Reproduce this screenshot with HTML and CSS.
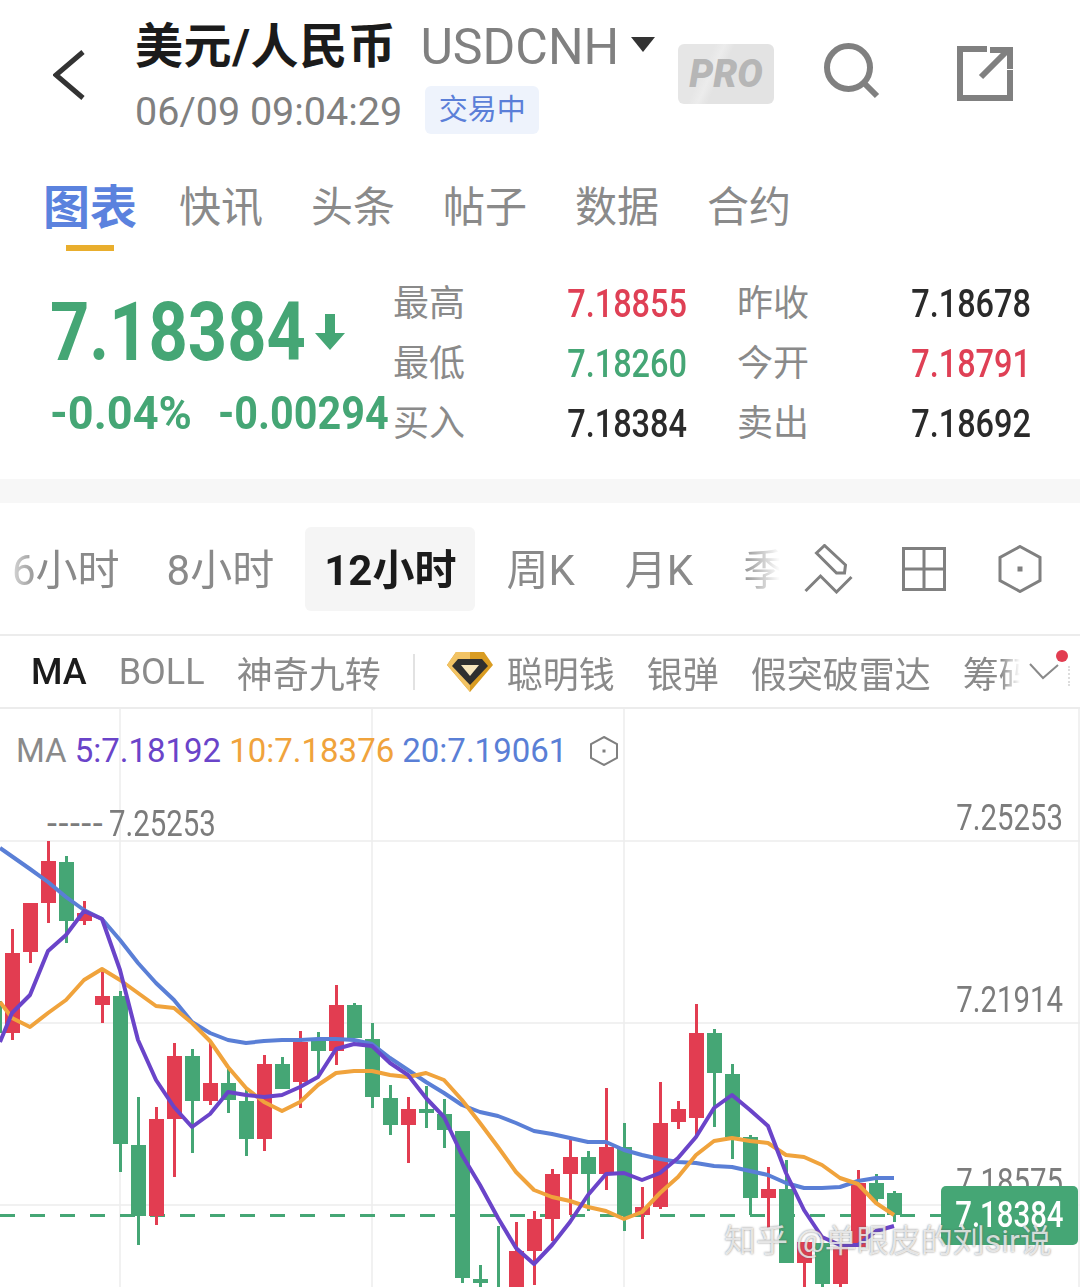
FILE: index.html
```html
<!DOCTYPE html>
<html lang="zh-CN">
<head>
    <meta charset="UTF-8">
    <meta name="viewport" content="width=device-width, initial-scale=1.0">
    <title>USDCNH</title>
    <link rel="stylesheet" href="styles.css">
</head>
<body>
    <!-- Top bar -->
    <header class="topbar">
        <svg class="back-icon" viewBox="0 0 32 50"><path d="M30 2 L3 25 L30 48" /></svg>
        <div class="title-box">
            <div class="title-row">
                <h1>美元/人民币</h1>
                <span class="symbol">USDCNH</span>
                <span class="caret"></span>
            </div>
            <div class="time-row">
                <span class="time">06/09 09:04:29</span>
                <span class="status">交易中</span>
            </div>
        </div>
        <div class="pro-badge">PRO</div>
        <svg class="search-icon" viewBox="0 0 56 56"><circle cx="24.500" cy="24.500" r="21.500" /><path d="M40 40 L53 53" /></svg>
        <svg class="share-icon" viewBox="0 0 56 56"><path d="M30 3 H3 V52 H53 V24" /><path d="M24 31 L50 5 M33 4 H53 V23" /></svg>
    </header>

    <!-- Page tabs -->
    <nav class="tabs">
        <a class="tab active">图表</a>
        <a class="tab">快讯</a>
        <a class="tab">头条</a>
        <a class="tab">帖子</a>
        <a class="tab">数据</a>
        <a class="tab">合约</a>
    </nav>

    <!-- Quote -->
    <section class="quote">
        <div class="quote-main">
            <div class="price-row">
                <span class="price">7.18384</span>
                <svg class="down-arrow" viewBox="0 0 30 36"><path d="M10 0 H20 V19 H30 L15 36 L0 19 H10 Z" /></svg>
            </div>
            <div class="change-row">
                <span class="change-pct">-0.04%</span>
                <span class="change-abs">-0.00294</span>
            </div>
        </div>
        <div class="stats">
            <span class="stat-label">最高</span><span class="stat-value red">7.18855</span>
            <span class="stat-label second">昨收</span><span class="stat-value">7.18678</span>
            <span class="stat-label">最低</span><span class="stat-value green">7.18260</span>
            <span class="stat-label second">今开</span><span class="stat-value red">7.18791</span>
            <span class="stat-label">买入</span><span class="stat-value">7.18384</span>
            <span class="stat-label second">卖出</span><span class="stat-value">7.18692</span>
        </div>
    </section>

    <div class="band"></div>

    <!-- Time frames -->
    <section class="frames">
        <div class="frame-list">
            <span class="frame">6小时</span>
            <span class="frame">8小时</span>
            <span class="frame active">12小时</span>
            <span class="frame">周K</span>
            <span class="frame">月K</span>
            <span class="frame">季K</span>
        </div>
        <svg class="tool-icon pen-icon" viewBox="0 0 50 50">
            <path d="M12.500 9 L20.500 1.500 L41.500 21 L40.500 29 L32.500 29 Z" />
            <path d="M1.500 47 L16.500 32 L32.500 48 L47.500 33" />
        </svg>
        <svg class="tool-icon grid-icon" viewBox="0 0 44 44"><path d="M1.500 1.500 H42.500 V42.500 H1.500 Z M22 1.500 V42.500 M1.500 22 H42.500" /></svg>
        <svg class="tool-icon hex-icon" viewBox="0 0 44 48">
            <path d="M22 1.500 L42 12.500 V35.500 L22 46.500 L2 35.500 V12.500 Z" />
            <rect class="hex-dot" x="19.500" y="21.500" width="5" height="5" />
        </svg>
    </section>

    <!-- Indicators -->
    <section class="indicators">
        <div class="indicator-list">
            <span class="indicator active">MA</span>
            <span class="indicator">BOLL</span>
            <span class="indicator">神奇九转</span>
            <span class="divider"></span>
            <span class="indicator gem-item">
                <svg class="gem-icon" viewBox="0 0 46 40">
                    <path class="gem-shade" d="M9 0 H37 L46 13 L23 40 L0 13 Z" />
                    <path class="gem-gold" d="M9 0 H23 V40 L0 13 Z" />
                    <path class="gem-dark" d="M11 7 H35 L41 14 L23 33 L5 14 Z" />
                    <path class="gem-light" d="M14 13 H32 L23 24 Z" />
                </svg>
                聪明钱
            </span>
            <span class="indicator">银弹</span>
            <span class="indicator">假突破雷达</span>
            <span class="indicator">筹码分布</span>
        </div>
        <svg class="chevron" viewBox="0 0 30 18"><path d="M1 1 L14 15 L29 2" /></svg>
        <span class="red-dot"></span>
        <span class="edge-dots"></span>
    </section>

    <!-- Chart -->
    <section class="chart">
        <svg id="kline" class="kline" viewBox="0 709 1080 578"></svg>
        <div class="legend">
            <span class="legend-name">MA</span>
            <span class="ma5">5:7.18192</span>
            <span class="ma10">10:7.18376</span>
            <span class="ma20">20:7.19061</span>
            <svg class="legend-hex" viewBox="0 0 28 30">
                <path d="M14 1 L27 8 V22 L14 29 L1 22 V8 Z" />
                <rect class="hex-dot" x="12.500" y="13.500" width="3" height="3" />
            </svg>
        </div>
        <div class="high-mark"><span class="high-dash">-----</span><span class="high-value">7.25253</span></div>
        <span class="axis-label axis-top">7.25253</span>
        <span class="axis-label axis-mid">7.21914</span>
        <span class="axis-label axis-low">7.18575</span>
        <div class="last-price"><span class="last-value">7.18384</span></div>
        <span class="watermark">知乎 @单眼皮的刘sir说</span>
    </section>

    <script src="script.js"></script>
</body>
</html>
```

FILE: styles.css
```css
* {
    box-sizing: border-box;
}

body {
    margin: 0;
    width: 1080px;
    height: 1287px;
    overflow: hidden;
    background: #fff;
    font-family: Roboto, "Noto Sans CJK SC", sans-serif;
    color: #888;
}

/* Top bar */
.topbar {
    display: flex;
    align-items: flex-start;
    height: 160px;
    padding-left: 53px;
}

.back-icon {
    width: 32px;
    height: 50px;
    margin-top: 50px;
    fill: none;
    stroke: #333;
    stroke-width: 5;
}

.title-box {
    margin-left: 50px;
    width: 543px;
}

.title-row {
    display: flex;
    align-items: center;
    height: 60px;
    margin-top: 17px;
}

.title-row h1 {
    margin: 0;
    font-size: 48px;
    line-height: 60px;
    font-weight: 700;
    letter-spacing: 0.6px;
    color: #1b1b1b;
}

.symbol {
    margin-left: 24px;
    font-size: 50px;
    color: #808080;
}

.caret {
    margin: 0 0 6px 12px;
    border-left: 12px solid transparent;
    border-right: 12px solid transparent;
    border-top: 15px solid #333;
}

.time-row {
    display: flex;
    align-items: center;
    margin-top: 9px;
}

.time {
    margin-top: 4px;
    font-size: 39.5px;
    line-height: 44px;
    color: #808080;
}

.status {
    margin-left: 23px;
    width: 114px;
    height: 48px;
    line-height: 48px;
    text-align: center;
    border-radius: 6px;
    background: #eef3fc;
    color: #5b7fd8;
    font-size: 29px;
}

.pro-badge {
    width: 96px;
    height: 60px;
    margin-top: 44px;
    border-radius: 6px;
    background: linear-gradient(115deg, #e6e6e6 30%, #ececec 38%, #e3e3e3 46%);
    color: #b6b6b6;
    font-size: 38px;
    font-weight: 900;
    font-style: italic;
    line-height: 60px;
    text-align: center;
}

.search-icon {
    width: 56px;
    height: 56px;
    margin: 43px 0 0 50px;
    fill: none;
    stroke: #808080;
    stroke-width: 6;
}

.share-icon {
    width: 56px;
    height: 56px;
    margin: 46px 0 0 77px;
    fill: none;
    stroke: #808080;
    stroke-width: 6;
}

/* Page tabs */
.tabs {
    display: flex;
    align-items: flex-start;
    height: 100px;
    padding-left: 43px;
}

.tab {
    position: relative;
    width: 132px;
    font-size: 42px;
    line-height: 96px;
    color: #8a8a8a;
}

.tab.active {
    width: 136px;
    font-size: 47px;
    font-weight: 700;
    color: #5b82de;
}

.tab.active:after {
    content: '';
    position: absolute;
    left: 23px;
    top: 85px;
    width: 48px;
    height: 6px;
    background: #e9ae2d;
}

/* Quote */
.quote {
    display: flex;
    height: 219px;
}

.quote-main {
    width: 393px;
    padding-left: 50px;
    color: #45a675;
}

.price-row {
    display: flex;
    align-items: center;
    height: 100px;
    margin-top: 22px;
}

.price {
    width: 265px;
    flex-shrink: 0;
    font-size: 82px;
    font-weight: 700;
    line-height: 100px;
    white-space: nowrap;
    transform: scaleX(0.836);
    transform-origin: left;
}

.down-arrow {
    width: 30px;
    height: 36px;
    flex-shrink: 0;
    fill: #45a675;
}

.change-row {
    display: flex;
    margin-top: 4px;
    font-size: 47px;
    line-height: 54px;
    font-weight: 700;
}

.change-pct {
    width: 168px;
    flex-shrink: 0;
    transform: scaleX(0.96);
    transform-origin: left;
}

.change-abs {
    width: 175px;
    flex-shrink: 0;
    white-space: nowrap;
    transform: scaleX(0.88);
    transform-origin: left;
}

.stats {
    display: grid;
    grid-template-columns: 72px 222px 122px 222px;
    grid-auto-rows: 60px;
    align-items: center;
    margin-top: 13px;
    height: 180px;
}

.stat-label {
    margin-bottom: 6px;
    font-size: 36px;
    color: #8a8a8a;
}

.stat-label.second {
    padding-left: 50px;
}

.stat-value {
    padding-top: 2px;
    text-align: right;
    font-size: 38px;
    font-weight: 500;
    color: #2a2a2a;
    transform: scaleX(0.855);
    transform-origin: right;
}

.stat-value.red {
    color: #df4055;
}

.stat-value.green {
    color: #45a675;
}

.band {
    height: 24px;
    background: #f7f7f7;
}

/* Time frames */
.frames {
    display: flex;
    align-items: center;
    height: 133px;
    border-bottom: 2px solid #ececec;
}

.frame-list {
    display: flex;
    align-items: center;
    gap: 12px;
    width: 780px;
    height: 84px;
    overflow: hidden;
    flex-shrink: 0;
    mask-image: linear-gradient(to right, rgba(0, 0, 0, 0.3) 10px, #000 40px, #000 740px, transparent 780px);
}

.frame {
    flex-shrink: 0;
    padding: 0 19px;
    height: 84px;
    font-size: 42px;
    line-height: 87px;
    white-space: nowrap;
    color: #8a8a8a;
}

.frame:first-child {
    margin-left: -7px;
    padding-right: 16px;
}

.frame.active {
    background: #f5f5f5;
    border-radius: 6px;
    color: #1b1b1b;
    font-weight: 700;
}

.tool-icon {
    fill: none;
    stroke: #808080;
    stroke-width: 3;
}

.pen-icon {
    width: 50px;
    height: 50px;
    margin-left: 24px;
}

.grid-icon {
    width: 44px;
    height: 44px;
    margin-left: 48px;
}

.hex-icon {
    width: 44px;
    height: 48px;
    margin-left: 52px;
}

.hex-dot {
    fill: #808080;
    stroke: none;
}

/* Indicators */
.indicators {
    position: relative;
    display: flex;
    align-items: center;
    height: 73px;
    padding-left: 31px;
    border-bottom: 2px solid #ececec;
}

.indicator-list {
    display: flex;
    align-items: center;
    gap: 32px;
    width: 989px;
    overflow: hidden;
    flex-shrink: 0;
    mask-image: linear-gradient(to right, #000 970px, transparent 989px);
}

.indicator {
    flex-shrink: 0;
    font-size: 36px;
    white-space: nowrap;
    color: #8a8a8a;
}

.indicator.active {
    color: #1b1b1b;
    font-weight: 500;
}

.divider {
    width: 2px;
    height: 36px;
    flex-shrink: 0;
    background: #e2e2e2;
}

.gem-item {
    display: flex;
    align-items: center;
    gap: 14px;
}

.gem-icon {
    width: 46px;
    height: 40px;
}

.gem-shade {
    fill: #d99c22;
}

.gem-gold {
    fill: #f2c364;
}

.gem-dark {
    fill: #2f2f2f;
}

.gem-light {
    fill: #f9e7bd;
}

.chevron {
    width: 30px;
    height: 18px;
    margin-left: 9px;
    fill: none;
    stroke: #8a8a8a;
    stroke-width: 2;
}

.red-dot {
    position: absolute;
    left: 1056px;
    top: 14px;
    width: 12px;
    height: 12px;
    border-radius: 50%;
    background: #e23d51;
}

.edge-dots {
    position: absolute;
    left: 1068px;
    top: 30px;
    height: 20px;
    border-left: 2px dotted #ddd;
}

/* Chart */
.chart {
    position: relative;
    height: 578px;
    overflow: hidden;
}

.kline {
    position: absolute;
    left: 0;
    top: 0;
    width: 1080px;
    height: 578px;
}

.grid-line {
    stroke: #ececec;
    stroke-width: 1.5;
}

.price-line {
    stroke: #45a675;
    stroke-width: 3;
    stroke-dasharray: 15 15;
}

.candle-red {
    fill: #e23d51;
}

.candle-green {
    fill: #45a675;
}

.ma-line {
    fill: none;
    stroke-width: 4;
    stroke-linejoin: round;
}

.ma-line-5 {
    stroke: #6a44c9;
}

.ma-line-10 {
    stroke: #f0a33c;
}

.ma-line-20 {
    stroke: #5a7fd6;
}

.legend {
    position: absolute;
    left: 16px;
    top: 22px;
    display: flex;
    align-items: center;
    gap: 8px;
    font-size: 33px;
    line-height: 40px;
}

.legend-name {
    color: #8a8a8a;
}

.ma5 {
    color: #6a44c9;
}

.ma10 {
    color: #f0a33c;
}

.ma20 {
    color: #5a7fd6;
}

.legend-hex {
    width: 28px;
    height: 30px;
    margin-left: 15px;
    fill: none;
    stroke: #808080;
    stroke-width: 2;
}

.high-mark {
    position: absolute;
    left: 47px;
    top: 95px;
    display: flex;
    font-size: 36px;
    line-height: 40px;
    color: #7c7c7c;
}

.high-dash {
    width: 62px;
    letter-spacing: 1.5px;
}

.high-value {
    transform: scaleX(0.815);
    transform-origin: left;
}

.axis-label {
    position: absolute;
    right: 17px;
    font-size: 36px;
    line-height: 40px;
    color: #7c7c7c;
    transform: scaleX(0.815);
    transform-origin: right;
}

.axis-top {
    top: 89px;
}

.axis-mid {
    top: 271px;
}

.axis-low {
    top: 453px;
}

.last-price {
    position: absolute;
    left: 941px;
    top: 477px;
    width: 137px;
    height: 59px;
    border-radius: 5px;
    text-align: center;
    background: #45a675;
    font-size: 36px;
    font-weight: 500;
    line-height: 59px;
    color: #fff;
}

.last-value {
    display: inline-block;
    transform: scaleX(0.815);
}

.watermark {
    position: absolute;
    left: 724px;
    top: 512px;
    font-size: 32px;
    line-height: 40px;
    white-space: nowrap;
    color: rgba(255, 255, 255, 0.75);
    text-shadow: 0 0 2px rgba(90, 90, 90, 0.8);
}
```

FILE: script.js
```js
// [x, color, wick top, wick bottom, body top, body bottom]
const candles = [
    [-6, "g", 990, 1045, 1001, 1033],
    [12, "r", 929, 1040, 953, 1033],
    [30, "r", 903, 963, 903, 952],
    [48, "r", 841, 923, 861, 903],
    [66, "g", 856, 943, 862, 921],
    [84, "r", 901, 925, 913, 921],
    [102, "r", 969, 1023, 996, 1005],
    [120, "g", 991, 1172, 996, 1144],
    [138, "g", 1097, 1245, 1145, 1216],
    [156, "r", 1107, 1225, 1119, 1216],
    [174, "r", 1043, 1177, 1056, 1119],
    [192, "g", 1049, 1153, 1056, 1101],
    [210, "r", 1043, 1105, 1083, 1101],
    [228, "g", 1067, 1113, 1083, 1100],
    [246, "g", 1089, 1156, 1101, 1139],
    [264, "r", 1055, 1151, 1064, 1139],
    [282, "g", 1057, 1089, 1064, 1089],
    [300, "r", 1031, 1108, 1042, 1082],
    [318, "g", 1032, 1077, 1038, 1051],
    [336, "r", 985, 1065, 1005, 1051],
    [354, "g", 1003, 1037, 1005, 1038],
    [372, "g", 1023, 1108, 1039, 1097],
    [390, "g", 1085, 1135, 1098, 1125],
    [408, "r", 1097, 1163, 1109, 1125],
    [426, "g", 1086, 1128, 1109, 1113],
    [444, "g", 1099, 1148, 1114, 1130],
    [462, "g", 1131, 1283, 1131, 1278],
    [480, "g", 1265, 1290, 1279, 1283],
    [498, "g", 1226, 1290, 1290, 1290],
    [516, "r", 1222, 1290, 1251, 1290],
    [534, "r", 1211, 1285, 1219, 1251],
    [552, "r", 1169, 1241, 1174, 1219],
    [570, "r", 1140, 1215, 1157, 1174],
    [588, "g", 1151, 1211, 1157, 1174],
    [606, "r", 1088, 1190, 1147, 1174],
    [624, "g", 1123, 1231, 1147, 1216],
    [642, "r", 1187, 1239, 1207, 1215],
    [660, "r", 1082, 1209, 1123, 1207],
    [678, "r", 1101, 1129, 1109, 1122],
    [696, "r", 1004, 1135, 1033, 1118],
    [714, "g", 1029, 1127, 1033, 1073],
    [732, "g", 1064, 1159, 1074, 1137],
    [750, "g", 1135, 1215, 1137, 1198],
    [768, "r", 1167, 1228, 1189, 1198],
    [786, "g", 1160, 1263, 1189, 1263],
    [804, "r", 1242, 1290, 1242, 1263],
    [822, "g", 1243, 1290, 1243, 1284],
    [840, "r", 1247, 1290, 1247, 1284],
    [858, "r", 1170, 1247, 1183, 1247],
    [876, "g", 1174, 1204, 1183, 1199],
    [894, "g", 1191, 1222, 1193, 1215]
];

const ma5 = "0,1042 12,1013 30,995 48,951 66,935 84,911 102,919 120,970 138,1040 156,1080 174,1107 192,1127 210,1114 228,1092 246,1095 264,1097 282,1095 300,1087 318,1077 336,1049 354,1044 372,1046 390,1063 408,1075 426,1098 444,1117 462,1155 480,1185 498,1218 516,1248 534,1264 552,1245 570,1222 588,1195 606,1174 624,1173 642,1180 660,1173 678,1158 696,1137 714,1108 732,1095 750,1110 768,1126 786,1173 804,1210 822,1237 840,1245 858,1245 876,1231 894,1226";
const ma10 = "0,1002 12,1018 30,1027 48,1013 66,1000 84,980 102,969 120,980 138,993 156,1006 174,1008 192,1023 210,1041 228,1067 246,1088 264,1102 282,1111 300,1102 318,1085 336,1073 354,1071 372,1071 390,1075 408,1077 426,1073 444,1080 462,1100 480,1123 498,1147 516,1172 534,1190 552,1197 570,1201 588,1207 606,1211 624,1219 642,1212 660,1193 678,1177 696,1155 714,1141 732,1138 750,1141 768,1143 786,1155 804,1157 822,1165 840,1178 858,1184 876,1203 894,1215";
const ma20 = "0,848 30,869 48,882 66,897 84,910 102,919 120,940 138,963 156,983 174,1000 192,1022 210,1033 228,1040 246,1043 264,1041 282,1040 300,1040 318,1039 336,1039 354,1040 372,1044 390,1058 408,1070 426,1082 444,1093 462,1105 480,1112 498,1116 516,1123 534,1131 552,1134 570,1138 588,1142 606,1142 624,1150 642,1155 660,1159 678,1162 696,1163 714,1166 732,1167 750,1171 768,1175 786,1183 804,1188 822,1188 840,1187 858,1181 876,1178 894,1178";

const svg = document.getElementById("kline");

function add(tag, attrs) {
    const el = document.createElementNS("http://www.w3.org/2000/svg", tag);
    for (const key in attrs) {
        el.setAttribute(key, attrs[key]);
    }
    svg.appendChild(el);
}

[120, 372, 624, 1079].forEach(x => add("line", { class: "grid-line", x1: x, x2: x, y1: 709, y2: 1287 }));
[841, 1023, 1205].forEach(y => add("line", { class: "grid-line", x1: 0, x2: 1080, y1: y, y2: y }));
add("line", { class: "price-line", x1: 0, x2: 941, y1: 1215.5, y2: 1215.5 });

candles.forEach(([x, color, wickTop, wickBottom, bodyTop, bodyBottom]) => {
    const cls = color === "r" ? "candle-red" : "candle-green";
    add("rect", { class: cls, x: x - 1, width: 3, y: wickTop, height: wickBottom - wickTop });
    add("rect", { class: cls, x: x - 7, width: 15, y: bodyTop, height: bodyBottom - bodyTop });
});

add("polyline", { class: "ma-line ma-line-20", points: ma20 });
add("polyline", { class: "ma-line ma-line-10", points: ma10 });
add("polyline", { class: "ma-line ma-line-5", points: ma5 });
```
